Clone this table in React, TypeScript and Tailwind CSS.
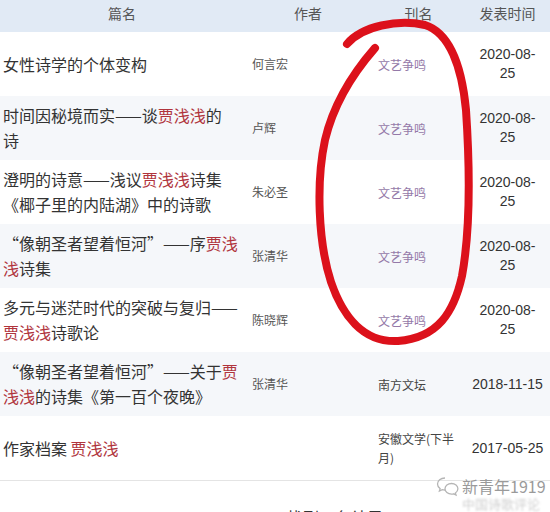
import React from 'react';

type Row = {
  title: string[];
  author: string;
  journal: string;
  linked: boolean;
  date: string[];
};

const rows: Row[] = [
  { title: ['女性诗学的个体变构'], author: '何言宏', journal: '文艺争鸣', linked: true, date: ['2020-08-', '25'] },
  { title: ['时间因秘境而实——谈{贾浅浅}的', '诗'], author: '卢辉', journal: '文艺争鸣', linked: true, date: ['2020-08-', '25'] },
  { title: ['澄明的诗意——浅议{贾浅浅}诗集', '《椰子里的内陆湖》中的诗歌'], author: '朱必圣', journal: '文艺争鸣', linked: true, date: ['2020-08-', '25'] },
  { title: ['“像朝圣者望着恒河”——序{贾浅}', '{浅}诗集'], author: '张清华', journal: '文艺争鸣', linked: true, date: ['2020-08-', '25'] },
  { title: ['多元与迷茫时代的突破与复归——', '{贾浅浅}诗歌论'], author: '陈晓辉', journal: '文艺争鸣', linked: true, date: ['2020-08-', '25'] },
  { title: ['“像朝圣者望着恒河”——关于{贾}', '{浅浅}的诗集《第一百个夜晚》'], author: '张清华', journal: '南方文坛', linked: false, date: ['2018-11-15'] },
  { title: ['作家档案 {贾浅浅}'], author: '', journal: '安徽文学(下半月)', linked: false, date: ['2017-05-25'] },
];

// "{...}" marks the highlighted keyword
function Line({ text }: { text: string }) {
  const parts = text.split(/(\{[^}]*\})/).filter(Boolean);
  return (
    <div>
      {parts.map((p, i) =>
        p.startsWith('{') ? (
          <span key={i} className="text-[#b0343c]">{p.slice(1, -1)}</span>
        ) : (
          <span key={i}>{p}</span>
        )
      )}
    </div>
  );
}

const cols = 'grid grid-cols-[244px_128px_93px_85px]';

export default function App() {
  return (
    <div
      className="relative w-[550px] h-[512px] overflow-hidden bg-white text-[#333]"
      style={{ fontFamily: '"Noto Sans CJK SC", "Noto Sans", sans-serif' }}
    >
      <div className={`${cols} h-8 bg-[#e1eaf5] text-[14px] leading-[18px] text-[#555] pt-[4px]`}>
        <div className="text-center">篇名</div>
        <div className="text-center">作者</div>
        <div className="text-center">刊名</div>
        <div className="text-center">发表时间</div>
      </div>

      {rows.map((r, i) => (
        <div key={i} className={`${cols} h-16 items-center ${i % 2 === 1 ? 'bg-[#f5f7fa]' : 'bg-white'}`}>
          <div className="pl-[3px] text-[16px] leading-[25px] whitespace-nowrap">
            {r.title.map((t, j) => (
              <Line key={j} text={t} />
            ))}
          </div>
          <div className="pl-2 text-[12px] text-[#555]">{r.author}</div>
          <div className={`pl-[6px] pr-2 text-[12px] leading-[19px] ${r.linked ? 'text-[#9479a8]' : 'text-[#444]'}`}>
            {r.journal}
          </div>
          <div className="text-center text-[14px] leading-[19px] text-[#333]" style={{ fontFamily: '"Liberation Sans", sans-serif' }}>
            {r.date.map((d, j) => (
              <div key={j}>{d}</div>
            ))}
          </div>
        </div>
      ))}

      <div className="border-t border-[#e4e4e4] pt-[26px] pl-[287px] text-[16px] leading-[20px]">找到 7 条结果</div>

      {/* watermark */}
      <div className="absolute left-[436px] top-[476px] flex items-start gap-[2px] text-[#a9a9a9] [text-shadow:0_0_2px_#fff]">
        <svg width="24" height="22" viewBox="0 0 24 22" fill="none" stroke="#b5b5b5" strokeWidth="1.3">
          <path d="M9 2C4.6 2 1.5 4.8 1.5 8c0 1.9 1 3.5 2.6 4.6L3.4 15l2.8-1.4c0.9 0.3 1.8 0.4 2.8 0.4" />
          <path d="M15.5 7.5c-3.7 0-6.5 2.4-6.5 5.3s2.8 5.3 6.5 5.3c0.8 0 1.5-0.1 2.2-0.3l2.3 1.2-0.6-2c1.5-1 2.5-2.5 2.5-4.2 0-2.9-2.8-5.3-6.4-5.3z" />
        </svg>
        <div className="flex flex-col">
          <span className="text-[16px] leading-[20px] text-[#9a9a9a]">新青年1919</span>
          <span className="text-[13px] leading-[16px] text-[#d0d0d0] blur-[1px]">中国诗歌评论</span>
        </div>
      </div>

      {/* red marker circle drawn over the screenshot */}
      <svg className="absolute left-0 top-0 pointer-events-none" width="550" height="512" viewBox="0 0 550 512" fill="none">
        <path
          d="M347 44 C362 26 398 19 425 25 C450 33 462 68 466 110 C470 170 470 232 462 276 C454 312 438 338 398 341 C362 343 342 314 331 282 C318 242 316 182 325 140 C334 102 354 72 375 48"
          stroke="#dc111b"
          strokeWidth="8"
          strokeLinecap="round"
          strokeLinejoin="round"
        />
      </svg>
    </div>
  );
}
